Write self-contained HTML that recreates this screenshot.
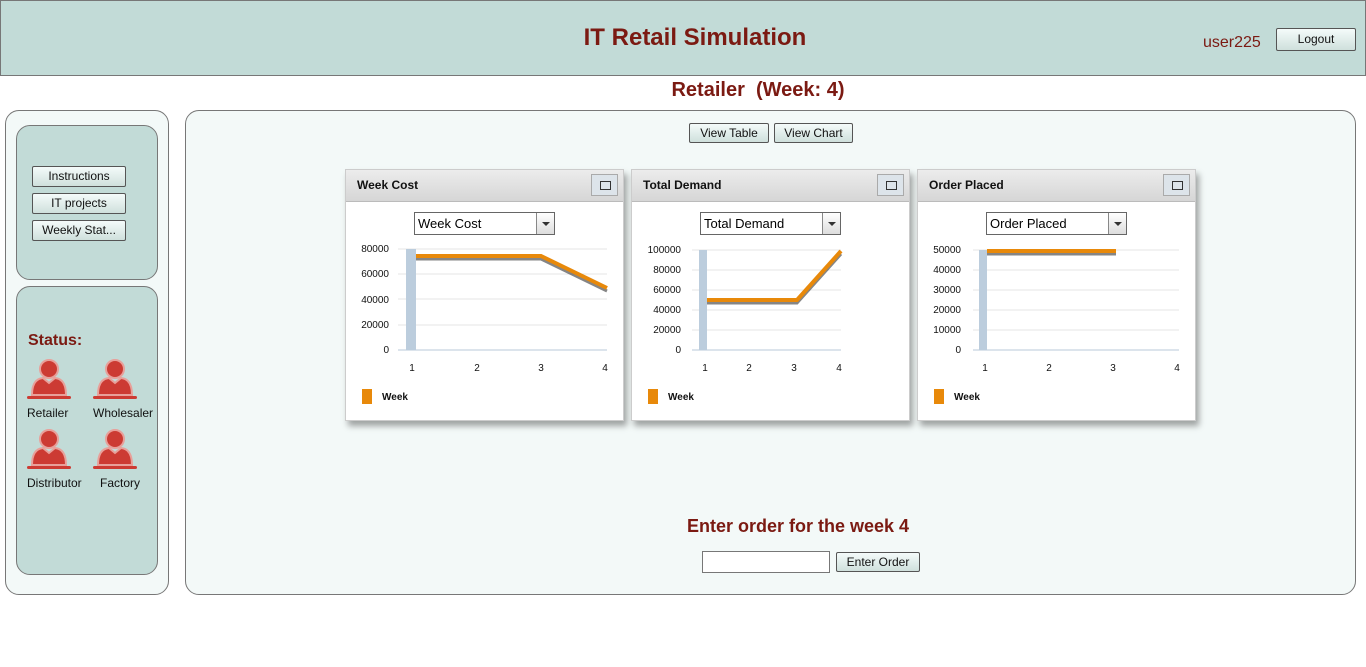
<!DOCTYPE html>
<html><head><meta charset="utf-8"><style>
*{box-sizing:border-box}
body{margin:0;width:1366px;height:667px;background:#fff;font-family:"Liberation Sans",Arial,sans-serif;position:relative;overflow:hidden}
.hdr{position:absolute;left:0;top:0;width:1366px;height:76px;background:#c2dbd7;border:1px solid #777}
.hdr h1{position:absolute;left:0;width:1388px;top:23px;margin:0;text-align:center;font-size:24px;color:#7b1a12;font-weight:bold}
.user{position:absolute;left:1202px;top:33px;font-size:16px;color:#7b1a12}
.btn{position:absolute;border:1px solid #555;border-radius:2px;background:linear-gradient(#f4fbfa,#cfe0dc);font-size:12px;color:#111;text-align:center;line-height:19px}
.title2{position:absolute;left:0;width:1516px;top:79px;text-align:center;font-size:20px;font-weight:bold;color:#7b1a12}
.box{position:absolute;border:1px solid #777;border-radius:14px;background:#f3f9f8}
.inner{position:absolute;border:1px solid #777;border-radius:14px;background:#c2dbd7}
.lbl{position:absolute;font-size:12px;color:#111}
.panel{position:absolute;top:169px;width:279px;height:252px;background:#fff;border:1px solid #ccc;box-shadow:3px 5px 6px rgba(0,0,0,.35)}
.ph{height:32px;background:linear-gradient(#ececec,#d6d6d6);border-bottom:1px solid #bbb;font-size:12px;font-weight:bold;color:#111;padding:8px 0 0 11px;position:relative}
.mx{position:absolute;right:5px;top:4px;width:27px;height:22px;border:1px solid #aaa;background:#dde4ea}
.mx:after{content:"";position:absolute;left:8px;top:6px;width:9px;height:7px;border:1px solid #333}
.sel{position:absolute;top:42px;width:141px;height:23px;border:1px solid #666;background:#fff;font-size:13px;padding:3px 0 0 3px}
.sel b{position:absolute;right:0;top:0;width:18px;height:21px;border-left:1px solid #888;background:linear-gradient(#fff,#ddd)}
.sel b:after{content:"";position:absolute;left:5px;top:9px;border:4px solid transparent;border-top:4px solid #333}
svg{position:absolute;left:0;top:31px}
svg text{font-family:"Liberation Sans",Arial,sans-serif;font-size:10px;fill:#111}
</style></head><body>
<div class="hdr"><h1>IT Retail Simulation</h1><div class="user">user225</div>
<div class="btn" style="left:1275px;top:27px;width:80px;height:23px;line-height:21px">Logout</div></div>
<div class="title2">Retailer &nbsp;(Week: 4)</div>

<div class="box" style="left:5px;top:110px;width:164px;height:485px"></div>
<div class="inner" style="left:16px;top:125px;width:142px;height:155px"></div>
<div class="btn" style="left:32px;top:166px;width:94px;height:21px">Instructions</div>
<div class="btn" style="left:32px;top:193px;width:94px;height:21px">IT projects</div>
<div class="btn" style="left:32px;top:220px;width:94px;height:21px">Weekly Stat...</div>
<div class="inner" style="left:16px;top:286px;width:142px;height:289px"></div>
<div style="position:absolute;left:28px;top:332px;font-size:16px;font-weight:bold;color:#7b1a12">Status:</div>
<svg style="left:0;top:0" width="170" height="500">
<defs><g id="p"><circle cx="22" cy="10" r="9" fill="#cc3b33" stroke="#e8a09a" stroke-width="2"/><path d="M5 36 Q5 20 16 19 L22 24 L28 19 Q39 20 39 36 Z" fill="#cc3b33" stroke="#e8a09a" stroke-width="2"/><rect x="0" y="37" width="44" height="3" rx="1.5" fill="#cc3b33"/></g></defs>
<use href="#p" x="27" y="359"/><use href="#p" x="93" y="359"/><use href="#p" x="27" y="429"/><use href="#p" x="93" y="429"/>
</svg>
<div class="lbl" style="left:27px;top:406px">Retailer</div>
<div class="lbl" style="left:93px;top:406px">Wholesaler</div>
<div class="lbl" style="left:27px;top:476px">Distributor</div>
<div class="lbl" style="left:100px;top:476px">Factory</div>

<div class="box" style="left:185px;top:110px;width:1171px;height:485px"></div>
<div class="btn" style="left:689px;top:123px;width:80px;height:20px">View Table</div>
<div class="btn" style="left:774px;top:123px;width:79px;height:20px">View Chart</div>

<div class="panel" style="left:345px"><div class="ph">Week Cost<div class="mx"></div></div>
<div class="sel" style="left:68px">Week Cost<b></b></div>
<svg width="279" height="220"><g stroke="#e6e6e6"><line x1="52" x2="261" y1="48" y2="48"/><line x1="52" x2="261" y1="73" y2="73"/><line x1="52" x2="261" y1="98" y2="98"/><line x1="52" x2="261" y1="124" y2="124"/></g>
<line x1="52" x2="261" y1="149" y2="149" stroke="#b8c8d8"/>
<rect x="60" y="48" width="10" height="101" fill="#bccddd"/>
<g text-anchor="end"><text x="43" y="51">80000</text><text x="43" y="76">60000</text><text x="43" y="102">40000</text><text x="43" y="127">20000</text><text x="43" y="152">0</text></g>
<polyline points="70,56 195,56 261,88" fill="none" stroke="#333" stroke-width="3" opacity=".6" transform="translate(0,2)"/>
<polyline points="70,55 195,55 261,87" fill="none" stroke="#e8890a" stroke-width="4"/>
<g text-anchor="middle"><text x="66" y="170">1</text><text x="131" y="170">2</text><text x="195" y="170">3</text><text x="259" y="170">4</text></g>
<rect x="16" y="188" width="10" height="15" fill="#e8890a"/><text x="36" y="199" font-weight="bold">Week</text></svg></div>

<div class="panel" style="left:631px"><div class="ph">Total Demand<div class="mx"></div></div>
<div class="sel" style="left:68px">Total Demand<b></b></div>
<svg width="279" height="220"><g stroke="#e6e6e6"><line x1="60" x2="209" y1="49" y2="49"/><line x1="60" x2="209" y1="69" y2="69"/><line x1="60" x2="209" y1="89" y2="89"/><line x1="60" x2="209" y1="109" y2="109"/><line x1="60" x2="209" y1="129" y2="129"/></g>
<line x1="60" x2="209" y1="149" y2="149" stroke="#b8c8d8"/>
<rect x="67" y="49" width="8" height="100" fill="#bccddd"/>
<g text-anchor="end"><text x="49" y="52">100000</text><text x="49" y="72">80000</text><text x="49" y="92">60000</text><text x="49" y="112">40000</text><text x="49" y="132">20000</text><text x="49" y="152">0</text></g>
<polyline points="75,100 165,100 209,51" fill="none" stroke="#333" stroke-width="3" opacity=".6" transform="translate(0,2)"/>
<polyline points="75,99 165,99 209,50" fill="none" stroke="#e8890a" stroke-width="4"/>
<g text-anchor="middle"><text x="73" y="170">1</text><text x="117" y="170">2</text><text x="162" y="170">3</text><text x="207" y="170">4</text></g>
<rect x="16" y="188" width="10" height="15" fill="#e8890a"/><text x="36" y="199" font-weight="bold">Week</text></svg></div>

<div class="panel" style="left:917px"><div class="ph">Order Placed<div class="mx"></div></div>
<div class="sel" style="left:68px">Order Placed<b></b></div>
<svg width="279" height="220"><g stroke="#e6e6e6"><line x1="55" x2="261" y1="49" y2="49"/><line x1="55" x2="261" y1="69" y2="69"/><line x1="55" x2="261" y1="89" y2="89"/><line x1="55" x2="261" y1="109" y2="109"/><line x1="55" x2="261" y1="129" y2="129"/></g>
<line x1="55" x2="261" y1="149" y2="149" stroke="#b8c8d8"/>
<rect x="61" y="49" width="8" height="100" fill="#bccddd"/>
<g text-anchor="end"><text x="43" y="52">50000</text><text x="43" y="72">40000</text><text x="43" y="92">30000</text><text x="43" y="112">20000</text><text x="43" y="132">10000</text><text x="43" y="152">0</text></g>
<polyline points="69,51 198,51" fill="none" stroke="#333" stroke-width="3" opacity=".6" transform="translate(0,2)"/>
<polyline points="69,50 198,50" fill="none" stroke="#e8890a" stroke-width="4"/>
<g text-anchor="middle"><text x="67" y="170">1</text><text x="131" y="170">2</text><text x="195" y="170">3</text><text x="259" y="170">4</text></g>
<rect x="16" y="188" width="10" height="15" fill="#e8890a"/><text x="36" y="199" font-weight="bold">Week</text></svg></div>

<div style="position:absolute;left:0;width:1596px;top:516px;text-align:center;font-size:18px;font-weight:bold;color:#7b1a12">Enter order for the week 4</div>
<div style="position:absolute;left:702px;top:551px;width:128px;height:22px;border:1px solid #777;background:#fff"></div>
<div class="btn" style="left:836px;top:552px;width:84px;height:20px">Enter Order</div>
</body></html>
